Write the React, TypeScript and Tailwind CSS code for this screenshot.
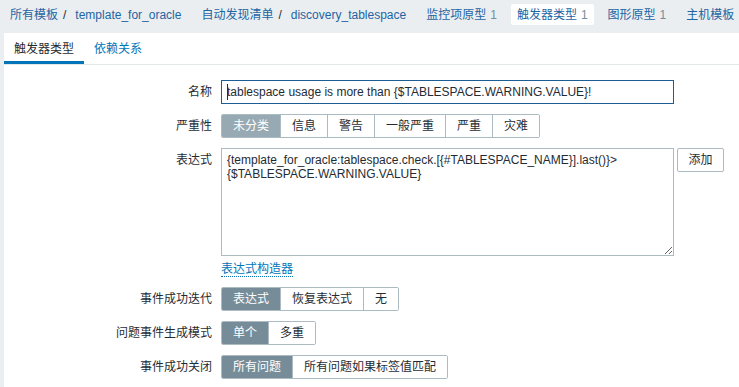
import React from "react";

type Opt = { label: string; selected?: boolean; selBg?: string };

function Group({ options }: { options: Opt[] }) {
  return (
    <div className="flex h-[24px] rounded-[2px] overflow-hidden border border-[#acbbc2]">
      {options.map((o, i) => (
        <div
          key={o.label}
          className={
            "flex items-center px-[11px] h-full whitespace-nowrap " +
            (i > 0 ? "border-l border-[#acbbc2] " : "") +
            (o.selected ? "text-white " : "bg-white text-[#1f2c33] ")
          }
          style={o.selected ? { backgroundColor: o.selBg || "#768d99" } : undefined}
        >
          {o.label}
        </div>
      ))}
    </div>
  );
}

function Row({ label, children, top }: { label: string; children: React.ReactNode; top?: boolean }) {
  return (
    <div className={"flex gap-[9px] " + (top ? "items-start" : "items-center")}>
      <div
        className={
          "w-[208px] shrink-0 text-right whitespace-nowrap " + (top ? "pt-[5px] leading-[14px]" : "leading-[24px]")
        }
      >
        {label}
      </div>
      <div className="flex items-start">{children}</div>
    </div>
  );
}

export default function App() {
  const expr =
    "{template_for_oracle:tablespace.check.[{#TABLESPACE_NAME}].last()}>{$TABLESPACE.WARNING.VALUE}";
  return (
    <div className="w-[739px] h-[387px] overflow-hidden bg-[#ebeef0] font-['Liberation_Sans','Noto_Sans_CJK_SC',sans-serif] text-[12px] text-[#1f2c33]">
      {/* header navigation */}
      <div className="h-[33px] flex items-start pt-[4px] whitespace-nowrap">
        <div className="flex items-center h-[21px] px-[10px] text-[#1d65a3]">
          <span>所有模板</span>
          <span className="ml-[5px] mr-[9px] text-[#1f2c33]">/</span>
          <span>template_for_oracle</span>
        </div>
        <div className="flex items-center h-[21px] px-[10px] text-[#1d65a3]">
          <span>自动发现清单</span>
          <span className="ml-[5px] mr-[9px] text-[#1f2c33]">/</span>
          <span>discovery_tablespace</span>
        </div>
        <div className="flex items-center h-[21px] px-[10px] text-[#1d65a3]">
          <span>监控项原型</span>
          <span className="ml-[4px] text-[#768d99]">1</span>
        </div>
        <div className="flex items-center h-[21px] mx-[4px] px-[6px] bg-white rounded-[2px] text-[#1d65a3]">
          <span>触发器类型</span>
          <span className="ml-[4px] text-[#768d99]">1</span>
        </div>
        <div className="flex items-center h-[21px] px-[10px] text-[#1d65a3]">
          <span>图形原型</span>
          <span className="ml-[4px] text-[#768d99]">1</span>
        </div>
        <div className="flex items-center h-[21px] px-[10px] text-[#1d65a3]">
          <span>主机模板</span>
        </div>
      </div>

      {/* panel */}
      <div className="ml-[4px] w-[800px] h-[354px] bg-white">
        <div className="flex h-[32px] border-b border-[#e3e8eb]">
          <div className="h-[31px] px-[10px] flex items-center border-b-[3px] border-[#0275b8] pt-[3px] text-[#1f2c33]">
            触发器类型
          </div>
          <div className="h-[31px] px-[10px] flex items-center pb-[0px] text-[#0275b8]">依赖关系</div>
        </div>

        <div className="pt-[15px] flex flex-col gap-[10px]">
          <Row label="名称">
            <div className="relative">
              <input
                readOnly
                value="tablespace usage is more than {$TABLESPACE.WARNING.VALUE}!"
                className="w-[453px] h-[24px] border border-[#1c5d94] px-[5px] text-[12px] text-[#1f2c33] outline-none bg-white"
              />
              <span className="absolute left-[6px] top-[4px] w-px h-[16px] bg-[#1f2c33]" />
            </div>
          </Row>

          <Row label="严重性">
            <Group
              options={[
                { label: "未分类", selected: true, selBg: "#97aab3" },
                { label: "信息" },
                { label: "警告" },
                { label: "一般严重" },
                { label: "严重" },
                { label: "灾难" },
              ]}
            />
          </Row>

          <Row label="表达式" top>
            <div className="flex flex-col items-start">
              <textarea
                readOnly
                value={expr}
                className="w-[453px] h-[108px] border border-[#acbbc2] px-[5px] py-[4px] leading-[14px] text-[12px] text-[#1f2c33] outline-none bg-white"
              />
              <span className="mt-[6px] leading-[14px] text-[#0275b8] border-b border-dotted border-[#0275b8]">
                表达式构造器
              </span>
            </div>
            <button className="ml-[3px] w-[47px] h-[24px] border border-[#acbbc2] rounded-[2px] bg-white text-[#1f2c33] text-[12px]">
              添加
            </button>
          </Row>

          <Row label="事件成功迭代">
            <Group options={[{ label: "表达式", selected: true }, { label: "恢复表达式" }, { label: "无" }]} />
          </Row>

          <Row label="问题事件生成模式">
            <Group options={[{ label: "单个", selected: true }, { label: "多重" }]} />
          </Row>

          <Row label="事件成功关闭">
            <Group options={[{ label: "所有问题", selected: true }, { label: "所有问题如果标签值匹配" }]} />
          </Row>
        </div>
      </div>
    </div>
  );
}
